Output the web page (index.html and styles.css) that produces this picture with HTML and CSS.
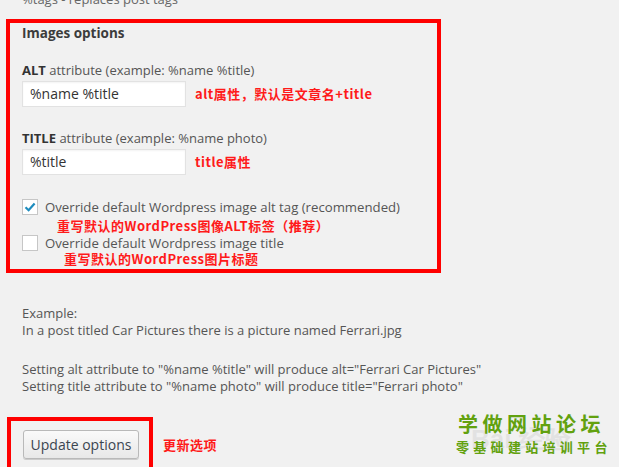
FILE: index.html
```html
<!DOCTYPE html>
<html lang="en">
<head>
    <meta charset="UTF-8">
    <title>Images options</title>
    <link rel="stylesheet" href="styles.css">
</head>
<body>
    <div class="page">
        <div class="top-clip">
            <p class="top-note">%tags - replaces post tags</p>
        </div>

        <div class="mark-box options-box">
            <h3>Images options</h3>

            <p class="label label-alt"><b>ALT</b> attribute (example: %name %title)</p>
            <div class="field-row">
                <span class="input">%name %title</span>
                <span class="note">alt属性，默认是文章名+title</span>
            </div>

            <p class="label label-title"><b>TITLE</b> attribute (example: %name photo)</p>
            <div class="field-row">
                <span class="input">%title</span>
                <span class="note">title属性</span>
            </div>

            <div class="check-row first">
                <span class="check">
                    <svg width="14" height="14" viewBox="0 0 14 14"><path d="M2.5 7.2 L5.6 10.2 L11.6 3.4" fill="none" stroke="#1e8cbe" stroke-width="2.2"/></svg>
                </span>
                <span>Override default Wordpress image alt tag (recommended)</span>
            </div>
            <p class="note note-alt">重写默认的WordPress图像ALT标签（推荐）</p>

            <div class="check-row second">
                <span class="check"></span>
                <span>Override default Wordpress image title</span>
            </div>
            <p class="note note-title">重写默认的WordPress图片标题</p>
        </div>

        <div class="example">
            <p>Example:<br>In a post titled Car Pictures there is a picture named Ferrari.jpg</p>
            <p>Setting alt attribute to "%name %title" will produce alt="Ferrari Car Pictures"<br>Setting title attribute to "%name photo" will produce title="Ferrari photo"</p>
        </div>

        <div class="submit-row">
            <div class="mark-box button-box">
                <span class="button">Update options</span>
            </div>
            <span class="note">更新选项</span>
        </div>
    </div>

    <div class="watermark">
        <span class="baidu">Bai 经验</span>
        <div class="brand">学做网站论坛</div>
        <div class="slogan">零基础建站培训平台</div>
    </div>
</body>
</html>
```

FILE: styles.css
```css
html, body {
    overflow: hidden;
}
body {
    margin: 0;
    background: #f1f1f1;
    color: #555;
    font-family: "Open Sans", "Noto Sans", Arial, sans-serif;
    font-size: 13px;
}
p {
    margin: 0;
}
.page {
    height: 467px;
    overflow: hidden;
}
.top-clip {
    height: 8px;
    overflow: hidden;
    display: flex;
    align-items: flex-end;
}
.top-note {
    padding-left: 22px;
    line-height: 18px;
    color: #666;
}
.mark-box {
    border: 4px solid #ff0000;
}
.options-box {
    margin: 11px 0 0 6px;
    width: 415px;
    height: 245px;
    padding: 1px 0 0 12px;
}
h3 {
    margin: 0;
    font-size: 13.5px;
    line-height: 18px;
    color: #3c3c3c;
}
.label {
    line-height: 18px;
    color: #555;
}
.label b {
    color: #333;
}
.label-alt {
    margin-top: 19px;
}
.label-title {
    margin-top: 22px;
}
.field-row {
    display: flex;
    align-items: center;
    margin-top: 2px;
}
.input {
    box-sizing: border-box;
    width: 164px;
    height: 26px;
    padding: 0 7px;
    background: #fff;
    border: 1px solid #e2e2e2;
    box-shadow: inset 0 1px 2px rgba(0, 0, 0, 0.05);
    font-size: 14px;
    line-height: 24px;
    color: #333;
}
.note {
    color: #ff1a1a;
    font-family: "Noto Sans CJK SC", sans-serif;
    font-weight: bold;
    font-size: 13px;
    letter-spacing: 0.5px;
    line-height: 16px;
}
.field-row .note {
    margin-left: 9px;
}
.check-row {
    display: flex;
    align-items: center;
    gap: 7px;
    line-height: 18px;
    color: #555;
    font-size: 13.2px;
}
.check-row.first {
    margin-top: 23px;
}
.check {
    box-sizing: border-box;
    width: 16px;
    height: 16px;
    background: #fff;
    border: 1px solid #c6c6c6;
    display: flex;
    align-items: center;
    justify-content: center;
}
.note-alt {
    margin-top: 2px;
    padding-left: 35px;
}
.note-title {
    margin-top: -1px;
    padding-left: 42px;
}
.example {
    margin-top: 32px;
    padding-left: 22px;
    line-height: 17px;
    color: #555;
}
.example p + p {
    margin-top: 22px;
}
.submit-row {
    display: flex;
    align-items: flex-start;
    gap: 10px;
    margin: 22px 0 0 7px;
}
.button-box {
    box-sizing: border-box;
    width: 146px;
    height: 60px;
    padding: 9px 0 0 12px;
    border-bottom: none;
}
.button {
    display: inline-block;
    box-sizing: border-box;
    width: 116px;
    height: 29px;
    border: 1px solid #b9b9b9;
    border-radius: 3px;
    background: linear-gradient(#fafafa, #e8e8e8);
    box-shadow: 0 1px 0 #ccc;
    font-size: 14px;
    line-height: 27px;
    text-align: center;
    color: #3b4550;
}
.submit-row > .note {
    margin-top: 20px;
    font-size: 13px;
}
.watermark {
    position: absolute;
    left: 456px;
    top: 410px;
    width: 165px;
}
.baidu {
    position: absolute;
    left: 15px;
    top: 12px;
    font-family: "Liberation Sans", sans-serif;
    font-weight: bold;
    font-size: 26px;
    color: rgba(200, 200, 200, 0.35);
}
.brand {
    position: relative;
    margin-left: 2px;
    font-family: "Noto Sans CJK SC", sans-serif;
    font-weight: bold;
    font-size: 20px;
    letter-spacing: 4.5px;
    line-height: 28px;
    color: #62a10f;
}
.slogan {
    position: relative;
    font-family: "Noto Sans CJK SC", sans-serif;
    font-weight: bold;
    font-size: 13px;
    letter-spacing: 4.3px;
    line-height: 18px;
    white-space: nowrap;
    color: #62a10f;
}
```
